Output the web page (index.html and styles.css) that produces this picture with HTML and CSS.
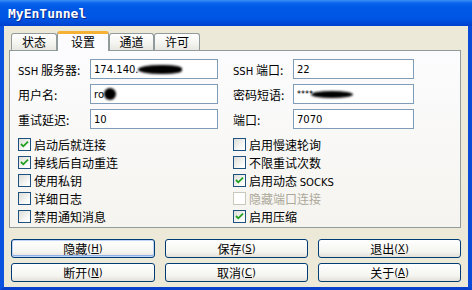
FILE: index.html
```html
<!DOCTYPE html>
<html lang="zh-CN">
<head>
    <meta charset="UTF-8">
    <meta name="viewport" content="width=device-width, initial-scale=1.0">
    <title>MyEnTunnel</title>
    <link rel="stylesheet" href="styles.css">
</head>
<body>
    <div class="window">
        <div class="titlebar">
            <span class="title">MyEnTunnel</span>
        </div>
        <div class="frame">
            <div class="tabs">
                <div class="tab">状态</div>
                <div class="tab active">设置</div>
                <div class="tab">通道</div>
                <div class="tab">许可</div>
            </div>
            <div class="panel">
                <!-- 服务器设置 -->
                <div class="fields">
                    <label><span class="lat">SSH</span> 服务器:</label>
                    <div class="field"><span class="lat">174.140.</span><span class="blob blob-long"></span></div>
                    <span></span>
                    <label><span class="lat">SSH</span> 端口:</label>
                    <div class="field"><span class="lat">22</span></div>

                    <label>用户名:</label>
                    <div class="field"><span class="lat">ro</span><span class="blob blob-dot"></span></div>
                    <span></span>
                    <label>密码短语:</label>
                    <div class="field"><span class="lat stars">****</span><span class="blob blob-pass"></span></div>

                    <label>重试延迟:</label>
                    <div class="field"><span class="lat">10</span></div>
                    <span></span>
                    <label>端口:</label>
                    <div class="field"><span class="lat">7070</span></div>
                </div>

                <!-- 选项 -->
                <div class="checks">
                    <div class="check"><span class="box checked"><svg viewBox="0 0 11 11"><path d="M2 5 L4.3 7.3 L9 2.6"/></svg></span><span>启动后就连接</span></div>
                    <div class="check"><span class="box"></span><span>启用慢速轮询</span></div>
                    <div class="check"><span class="box checked"><svg viewBox="0 0 11 11"><path d="M2 5 L4.3 7.3 L9 2.6"/></svg></span><span>掉线后自动重连</span></div>
                    <div class="check"><span class="box"></span><span>不限重试次数</span></div>
                    <div class="check"><span class="box"></span><span>使用私钥</span></div>
                    <div class="check"><span class="box checked"><svg viewBox="0 0 11 11"><path d="M2 5 L4.3 7.3 L9 2.6"/></svg></span><span>启用动态 <span class="lat">SOCKS</span></span></div>
                    <div class="check"><span class="box"></span><span>详细日志</span></div>
                    <div class="check disabled"><span class="box"></span><span>隐藏端口连接</span></div>
                    <div class="check"><span class="box"></span><span>禁用通知消息</span></div>
                    <div class="check"><span class="box checked"><svg viewBox="0 0 11 11"><path d="M2 5 L4.3 7.3 L9 2.6"/></svg></span><span>启用压缩</span></div>
                </div>
            </div>

            <div class="buttons">
                <button class="default">隐藏<span class="lat">(<u>H</u>)</span></button>
                <button>保存<span class="lat">(<u>S</u>)</span></button>
                <button>退出<span class="lat">(<u>X</u>)</span></button>
                <button>断开<span class="lat">(<u>N</u>)</span></button>
                <button>取消<span class="lat">(<u>C</u>)</span></button>
                <button>关于<span class="lat">(<u>A</u>)</span></button>
            </div>
        </div>
    </div>
</body>
</html>
```

FILE: styles.css
```css
* {
    box-sizing: border-box;
    margin: 0;
    padding: 0;
}

body {
    font-family: "Noto Sans CJK SC", sans-serif;
    font-size: 12px;
    color: #000;
    background-color: #ece9d8;
}

.lat {
    font-family: "DejaVu Sans", sans-serif;
    font-size: 10px;
}

.window {
    display: flex;
    flex-direction: column;
    width: 472px;
    height: 290px;
}

.titlebar {
    height: 26px;
    display: flex;
    align-items: center;
    padding-left: 8px;
    background: linear-gradient(to bottom, #3a8ff8 0%, #0a64ec 12%, #0058e6 30%, #0055e4 70%, #0049d8 88%, #003fcf 100%);
}

.title {
    font-family: "DejaVu Sans Mono", monospace;
    font-weight: bold;
    font-size: 13px;
    color: #fff;
    text-shadow: 1px 1px 0 #0a2a8a;
}

.frame {
    flex: 1;
    display: flex;
    flex-direction: column;
    background-color: #ece9d8;
    border-left: 4px solid #0a52e0;
    border-right: 4px solid #0a4ad8;
    border-bottom: 3px solid #0840cc;
    padding: 5px 7px 0 5px;
}

.tabs {
    display: flex;
    align-items: flex-end;
    height: 19px;
    margin-left: 2px;
    position: relative;
    z-index: 1;
}

.tab {
    height: 17px;
    width: 46px;
    display: flex;
    align-items: center;
    justify-content: center;
    border: 1px solid #919b9c;
    border-bottom: none;
    border-radius: 3px 3px 0 0;
    background: linear-gradient(to bottom, #ffffff, #f3f3ef 60%, #e8e7e1);
    line-height: 1;
}

.tab:nth-child(3) {
    width: 45px;
}

.tab.active {
    width: 52px;
    height: 20px;
    margin-bottom: -1px;
    border-top: 3px solid #f5b133;
    background: #fcfcfe;
    padding-bottom: 2px;
}

.panel {
    border: 1px solid #919b9c;
    background: linear-gradient(to bottom, #fcfcfe, #f5f4ef);
    padding: 8px 0 2px 8px;
}

.fields {
    display: grid;
    grid-template-columns: 72px 128px 15px 60px 121px;
    grid-auto-rows: 20px;
    row-gap: 5px;
    align-items: center;
}

.fields label {
    white-space: nowrap;
}

.field {
    height: 20px;
    display: flex;
    align-items: center;
    padding-left: 3px;
    border: 1px solid #7f9db9;
    background-color: #fff;
    white-space: nowrap;
}

.stars {
    font-size: 8px;
    padding-top: 1px;
}

.blob {
    display: inline-block;
    background-color: #000;
    border-radius: 50%;
    filter: blur(1.2px);
}

.blob-long {
    width: 44px;
    height: 9px;
    margin-left: -1px;
    border-radius: 50% 40% 40% 50%;
}

.blob-dot {
    width: 12px;
    height: 12px;
}

.blob-pass {
    width: 42px;
    height: 7px;
    margin-left: -2px;
}

.checks {
    display: grid;
    grid-template-columns: 215px 200px;
    grid-auto-rows: 18px;
    margin-top: 6px;
}

.check {
    display: flex;
    align-items: center;
    white-space: nowrap;
}

.box {
    width: 13px;
    height: 13px;
    margin-right: 3px;
    border: 1px solid #1c5180;
    background: linear-gradient(135deg, #dcdcd7, #ffffff 85%);
    display: flex;
}

.box svg {
    width: 11px;
    height: 11px;
}

.box path {
    fill: none;
    stroke: #21a121;
    stroke-width: 1.8;
}

.check.disabled {
    color: #aca899;
}

.check.disabled .box {
    border-color: #cac8bb;
    background: #fff;
}

.buttons {
    display: grid;
    grid-template-columns: 144px 143px 143px;
    grid-auto-rows: 19px;
    column-gap: 10px;
    row-gap: 5px;
    margin: 11px 0 0 2px;
}

button {
    font-family: "Noto Sans CJK SC", sans-serif;
    font-size: 12px;
    color: #000;
    border: 1px solid #003c74;
    border-radius: 3px;
    background: linear-gradient(to bottom, #ffffff, #f4f4f0 70%, #e3e0d6);
    display: flex;
    align-items: center;
    justify-content: center;
    line-height: 1;
}

button .lat {
    padding-top: 1px;
}

button.default {
    box-shadow: inset 0 0 0 1px #c1d5f6, inset 0 -1px 0 1px #8fb1e8;
}
```
